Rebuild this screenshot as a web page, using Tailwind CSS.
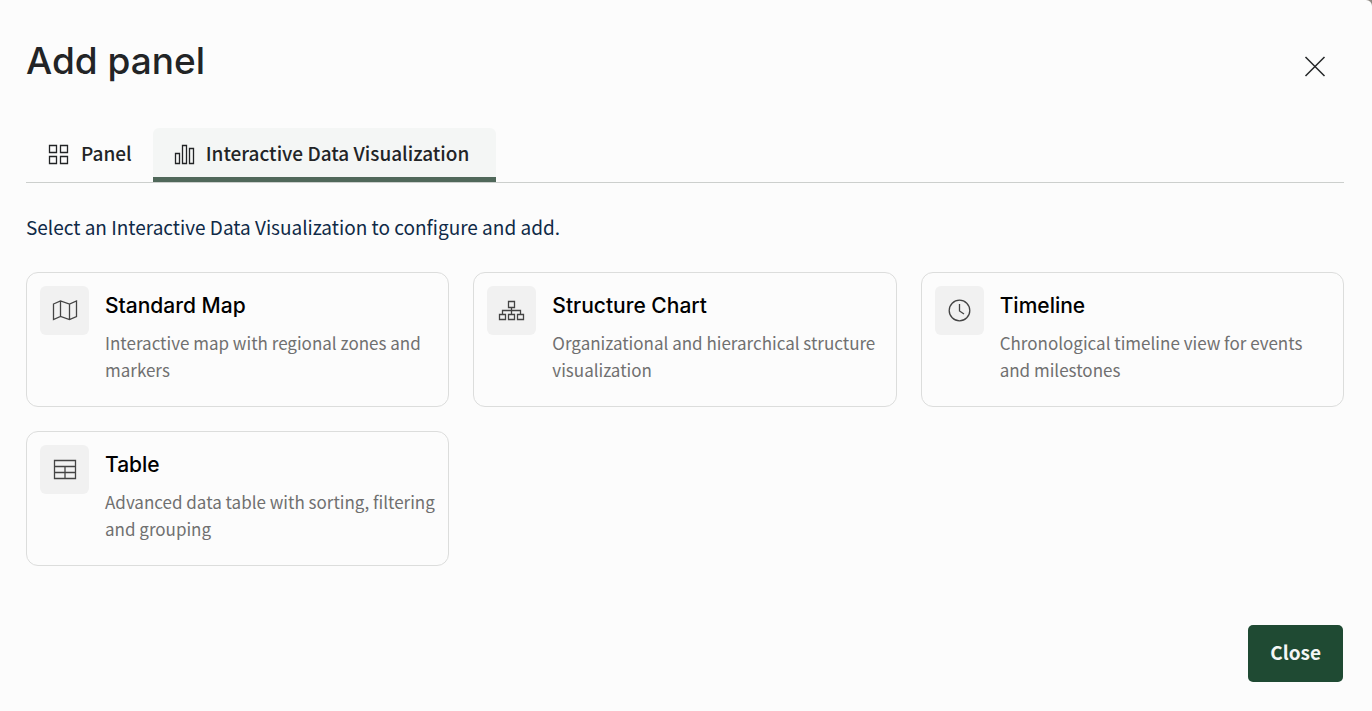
<!DOCTYPE html>
<html lang="en">
  <head>
    <meta charset="UTF-8" />
    <meta name="viewport" content="width=device-width, initial-scale=1.0" />
    <title>Add panel</title>
    <script src="https://cdn.jsdelivr.net/npm/@tailwindcss/browser@4"></script>
  </head>
  <body class="bg-[#8f8a84] font-['Noto_Sans_CJK_SC',sans-serif]">

    <!-- Dialog -->
    <div role="dialog" aria-labelledby="dialog-title" class="flex min-h-screen flex-col rounded-tr-md bg-[#fcfcfc] pt-9 pr-7 pb-7 pl-[26px]">

      <!-- Header -->
      <header class="flex items-start justify-between">
        <h1 id="dialog-title" class="font-['Inter',sans-serif] text-[37px] leading-[50px] font-medium text-[#222426]">Add panel</h1>
        <button type="button" aria-label="Close dialog" class="mt-[3px] flex size-14 items-center justify-center text-[#222426]">
          <svg class="size-6" viewBox="0 0 24 24" fill="none" stroke="currentColor" stroke-width="1.5">
            <path d="M1.5 2l19 19M20.5 2l-19 19" />
          </svg>
        </button>
      </header>

      <!-- Tabs -->
      <div role="tablist" class="mt-[33px] flex border-b border-[#cccfcd] text-[19px] text-[#222426]">
        <button type="button" role="tab" aria-selected="false" class="flex h-[54px] items-center gap-[10px] px-[21px] pb-[3px] font-medium">
          <svg class="mt-[3px] size-6" viewBox="0 0 24 24" fill="none" stroke="currentColor" stroke-width="1.3">
            <path d="M2.5 2.5h7v7h-7zM13.5 2.5h7v7h-7zM2.5 13.5h7v7h-7zM13.5 13.5h7v7h-7z" />
          </svg>
          Panel
        </button>
        <button type="button" role="tab" aria-selected="true" class="flex h-[54px] items-center gap-2 rounded-t-md border-b-[5px] border-[#50685a] bg-[#f4f6f5] pt-[2px] pr-[27px] pl-[21px] font-medium">
          <svg class="mt-[3px] size-6" viewBox="0 0 24 24" fill="none" stroke="currentColor" stroke-width="1.3">
            <path d="M1.5 10.5h4v10h-4zM8.5 2.5h4v18h-4zM15.5 5.5h4v15h-4z" />
          </svg>
          Interactive Data Visualization
        </button>
      </div>

      <p class="mt-[30px] text-[19px] leading-7 text-[#0f2a47]">Select an Interactive Data Visualization to configure and add.</p>

      <!-- Visualization types -->
      <div class="mt-[31px] grid grid-cols-3 gap-6">
        <button type="button" class="flex items-start gap-4 rounded-xl border border-[#dcdddc] p-[13px] pb-[23px] text-left">
          <span class="flex size-[49px] shrink-0 items-center justify-center rounded-md bg-[#f1f1f1] text-[#444444]">
            <svg class="size-7" viewBox="0 0 28 28" fill="none" stroke="currentColor" stroke-width="1.3">
              <path d="M2.5 7l7-3 9 3 7-3v15.500l-7 3-9-3-7 3zM9.500 4v15.500M18.500 7v15.500" />
            </svg>
          </span>
          <span>
            <span class="block font-['Inter',sans-serif] text-[21px] leading-10 font-medium text-black">Standard Map</span>
            <span class="mt-[3px] block text-[17px] leading-[27px] text-[#707070]">Interactive map with regional zones and markers</span>
          </span>
        </button>
        <button type="button" class="flex items-start gap-4 rounded-xl border border-[#dcdddc] p-[13px] pb-[23px] text-left">
          <span class="flex size-[49px] shrink-0 items-center justify-center rounded-md bg-[#f1f1f1] text-[#444444]">
            <svg class="size-7" viewBox="0 0 28 28" fill="none" stroke="currentColor" stroke-width="1.3">
              <path d="M10.5 4.5h6v6h-6zM1.5 17.5h6v5h-6zM10.5 17.5h6v5h-6zM19.5 17.5h6v5h-6zM13.5 10.5v7M4.5 17.5v-4h18v4" />
            </svg>
          </span>
          <span>
            <span class="block font-['Inter',sans-serif] text-[21px] leading-10 font-medium text-black">Structure Chart</span>
            <span class="mt-[3px] block text-[17px] leading-[27px] text-[#707070]">Organizational and hierarchical structure visualization</span>
          </span>
        </button>
        <button type="button" class="flex items-start gap-4 rounded-xl border border-[#dcdddc] p-[13px] pb-[23px] text-left">
          <span class="flex size-[49px] shrink-0 items-center justify-center rounded-md bg-[#f1f1f1] text-[#444444]">
            <svg class="size-7" viewBox="0 0 28 28" fill="none" stroke="currentColor" stroke-width="1.3">
              <circle cx="14.5" cy="13.5" r="10.3" />
              <path d="M14.500 7v7l4.500 3" />
            </svg>
          </span>
          <span>
            <span class="block font-['Inter',sans-serif] text-[21px] leading-10 font-medium text-black">Timeline</span>
            <span class="mt-[3px] block text-[17px] leading-[27px] text-[#707070]">Chronological timeline view for events and milestones</span>
          </span>
        </button>
        <button type="button" class="flex items-start gap-4 rounded-xl border border-[#dcdddc] p-[13px] pb-[23px] text-left">
          <span class="flex size-[49px] shrink-0 items-center justify-center rounded-md bg-[#f1f1f1] text-[#444444]">
            <svg class="size-7" viewBox="0 0 28 28" fill="none" stroke="currentColor" stroke-width="1.3">
              <path d="M3.5 4.5h21v18h-21zM3.5 10.5h21M3.5 16.5h21M14 10.5v12" />
            </svg>
          </span>
          <span>
            <span class="block font-['Inter',sans-serif] text-[21px] leading-10 font-medium text-black">Table</span>
            <span class="mt-[3px] block text-[17px] leading-[27px] text-[#707070]">Advanced data table with sorting, filtering and grouping</span>
          </span>
        </button>
      </div>

      <!-- Footer -->
      <footer class="mt-auto flex justify-end pt-8 pr-px pb-px">
        <button type="button" class="h-[57px] rounded-[5px] bg-[#1f4a33] px-[22px] pb-[2px] text-[19px] font-bold text-[#f4f6f5]">Close</button>
      </footer>
    </div>
  </body>
</html>
